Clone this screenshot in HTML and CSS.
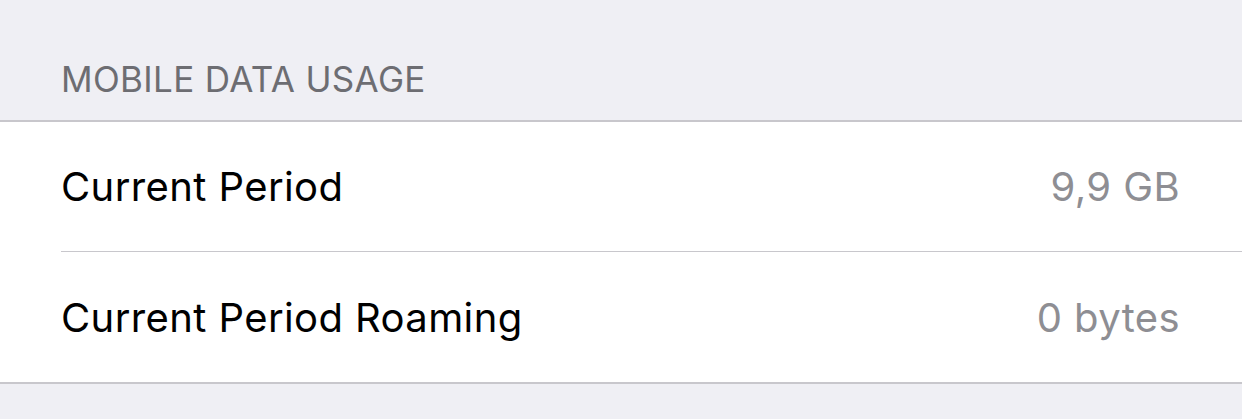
FILE: index.html
```html
<!DOCTYPE html>
<html lang="en">
<head>
    <meta charset="UTF-8">
    <meta name="viewport" content="width=device-width, initial-scale=1.0">
    <title>Mobile Data</title>
    <link rel="stylesheet" href="styles.css">
</head>
<body>
    <div class="encabezado">MOBILE DATA USAGE</div>
    <div class="grupo">
        <div class="fila">
            <div class="fila-contenido separada">
                <span class="titulo">Current Period</span>
                <span class="valor">9,9 GB</span>
            </div>
        </div>
        <div class="fila">
            <div class="fila-contenido">
                <span class="titulo">Current Period Roaming</span>
                <span class="valor">0 bytes</span>
            </div>
        </div>
    </div>
</body>
</html>
```

FILE: styles.css
```css
body {
    margin: 0;
    background-color: #efeff4;
    font-family: Inter, "Noto Sans", sans-serif;
}

.encabezado {
    height: 120px;
    box-sizing: border-box;
    padding: 62px 0 0 61px;
    font-size: 35px;
    line-height: 35px;
    letter-spacing: 0.35px;
    color: #6d6d72;
}

.grupo {
    background-color: #fff;
    border-top: 2px solid #c8c7cc;
    border-bottom: 2px solid #c8c7cc;
}

.fila {
    padding-left: 61px;
}

.fila-contenido {
    height: 130px;
    box-sizing: border-box;
    display: flex;
    align-items: center;
    justify-content: space-between;
    padding-right: 62px;
}

.separada {
    border-bottom: 1px solid #c8c7cc;
}

.titulo {
    font-size: 40px;
    letter-spacing: 0.4px;
    color: #000;
}

.valor {
    font-size: 40px;
    letter-spacing: 0.4px;
    color: #8e8e93;
}
```
